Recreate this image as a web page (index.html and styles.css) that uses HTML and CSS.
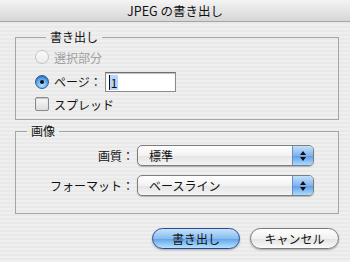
FILE: index.html
```html
<!DOCTYPE html>
<html lang="ja">
<head>
    <meta charset="UTF-8">
    <title>JPEG の書き出し</title>
    <link rel="stylesheet" href="styles.css">
</head>
<body>

<div class="window">
    <div class="titlebar">JPEG の書き出し</div>

    <fieldset class="group group-export">
        <legend>書き出し</legend>
        <div class="row row-radio">
            <span class="radio disabled"></span>
            <span class="label disabled-text">選択部分</span>
        </div>
        <div class="row row-page">
            <span class="radio checked"></span>
            <span class="label">ページ：</span>
            <span class="textfield"><span class="sel">1</span></span>
        </div>
        <div class="row row-check">
            <span class="checkbox"></span>
            <span class="label">スプレッド</span>
        </div>
    </fieldset>

    <fieldset class="group group-image">
        <legend>画像</legend>
        <div class="row row-popup">
            <span class="popup-label">画質：</span>
            <span class="popup">
                <span class="popup-text">標準</span>
                <span class="popup-arrows">
                    <svg width="8" height="12" viewBox="0 0 8 12"><path d="M4 1 L7 5 L1 5 Z M1 7 L7 7 L4 11 Z" fill="#111"/></svg>
                </span>
            </span>
        </div>
        <div class="row row-popup">
            <span class="popup-label">フォーマット：</span>
            <span class="popup">
                <span class="popup-text">ベースライン</span>
                <span class="popup-arrows">
                    <svg width="8" height="12" viewBox="0 0 8 12"><path d="M4 1 L7 5 L1 5 Z M1 7 L7 7 L4 11 Z" fill="#111"/></svg>
                </span>
            </span>
        </div>
    </fieldset>

    <div class="buttons">
        <button class="btn btn-default">書き出し</button>
        <button class="btn">キャンセル</button>
    </div>
</div>

</body>
</html>
```

FILE: styles.css
```css
body {
    margin: 0;
    font-family: "Noto Sans CJK JP", "Noto Sans", sans-serif;
    font-size: 12px;
    color: #111;
}
.window {
    width: 350px;
    height: 262px;
    overflow: hidden;
    background: repeating-linear-gradient(#efefef 0 2px, #e9e9e9 2px 4px);
}
.titlebar {
    height: 21px;
    line-height: 21px;
    text-align: center;
    font-size: 12.5px;
    background: linear-gradient(#f4f4f4, #d6d6d6);
    border-bottom: 1px solid #a4a4a4;
}
.group {
    margin: 0 11px 0 15px;
    padding: 0;
    border: 1px solid #a5a5a5;
    min-width: 0;
}
.group legend {
    height: 16px;
    line-height: 16px;
    padding: 0 4px;
    margin-left: 11px;
}
.group-export {
    margin-top: 7px;
    padding: 3px 0 6px 19px;
}
.group-image {
    margin-top: 3px;
    padding: 6px 0 17px 0;
}
.row {
    display: flex;
    align-items: center;
}
.row-radio { height: 18px; }
.row-page { height: 21px; margin-top: 5px; }
.row-check { height: 18px; margin-top: 3px; }
.label {
    margin-left: 5px;
}
.disabled-text {
    color: #a0a0a0;
}
.radio {
    width: 12px;
    height: 12px;
    border-radius: 50%;
    border: 1px solid #8a8a8a;
    background: linear-gradient(#f6f6f6, #dcdcdc);
    box-shadow: inset 0 1px 1px rgba(0,0,0,0.2);
    display: flex;
    align-items: center;
    justify-content: center;
}
.radio.disabled {
    border-color: #c4c4c4;
    background: linear-gradient(#fafafa, #ececec);
    box-shadow: none;
}
.radio.checked {
    border-color: #34569a;
    background: radial-gradient(circle at 50% 75%, #b9e2ff 0, #5aa6ee 55%, #2a6cc8 100%);
}
.radio.checked::after {
    content: "";
    width: 4px;
    height: 4px;
    border-radius: 50%;
    background: #111;
}
.textfield {
    margin-left: 3px;
    width: 66px;
    height: 17px;
    border: 1px solid #8c8c8c;
    border-top-color: #6f6f6f;
    background: #fff;
    box-shadow: inset 0 1px 1px rgba(0,0,0,0.25);
    padding: 1px 0 0 3px;
    display: flex;
    align-items: center;
}
.sel {
    background: #b5d5ff;
    line-height: 15px;
    padding: 0 1px;
    border-left: 1px solid #111;
}
.checkbox {
    width: 12px;
    height: 12px;
    border: 1px solid #8a8a8a;
    border-radius: 2px;
    background: linear-gradient(#f8f8f8, #dedede);
    box-shadow: inset 0 1px 1px rgba(0,0,0,0.2);
}
.row-popup {
    height: 21px;
}
.row-popup + .row-popup {
    margin-top: 9px;
}
.popup-label {
    width: 118px;
    text-align: right;
    margin-right: 3px;
}
.popup {
    display: flex;
    width: 175px;
    height: 19px;
    border: 1px solid #7d7d7d;
    border-radius: 5px;
    overflow: hidden;
    background: linear-gradient(#ffffff, #f2f2f2 50%, #e4e4e4 51%, #f4f4f4);
    box-shadow: 0 1px 1px rgba(0,0,0,0.25);
}
.popup-text {
    flex: 1;
    line-height: 19px;
    padding-left: 11px;
}
.popup-arrows {
    width: 20px;
    display: flex;
    align-items: center;
    justify-content: center;
    border-left: 1px solid #6a8cc4;
    background: linear-gradient(#c4e0fb, #7fb4ee 50%, #5d9be6 51%, #a9dcff);
}
.buttons {
    display: flex;
    justify-content: flex-end;
    gap: 10px;
    margin: 14px 11px 0 0;
}
.btn {
    font-family: inherit;
    font-size: 12px;
    color: #111;
    height: 21px;
    padding: 0;
    border: 1px solid #7a7a7a;
    border-radius: 11px;
    background: linear-gradient(#ffffff, #f0f0f0 50%, #e2e2e2 51%, #fafafa);
    box-shadow: 0 1px 2px rgba(0,0,0,0.3);
    width: 89px;
}
.btn-default {
    width: 88px;
    border-color: #2c4a8f;
    background: linear-gradient(#c6e2fb, #86bdf0 50%, #5fa2e8 51%, #b5e3ff);
}
```
